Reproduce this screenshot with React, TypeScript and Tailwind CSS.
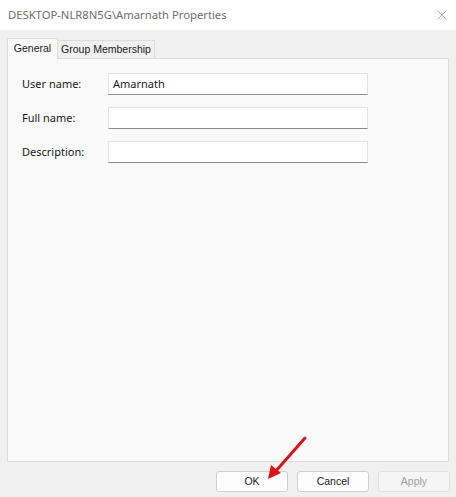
import { X } from 'lucide-react'

const font = { fontFamily: '"Noto Sans", "Open Sans", sans-serif' }
const narrow = { fontFamily: '"Liberation Sans", Arial, sans-serif' }

function Field({ label, value }: { label: string; value?: string }) {
    return (
        <div className="flex items-center h-[22px]">
            <span className="w-[86px] text-[11px] text-[#1a1a1a]">{label}</span>
            <div className="w-[260px] h-[22px] bg-white border border-[#e3e3e3] border-b-[#8a8a8a] flex items-center px-[4px] text-[11px] text-[#1a1a1a]">
                {value}
            </div>
        </div>
    )
}

function Btn({ text, disabled }: { text: string; disabled?: boolean }) {
    return (
        <div style={narrow} className={
            disabled
                ? 'w-[72px] h-[21px] rounded-[3px] border border-[#e2e2e2] bg-[#f5f5f5] flex items-center justify-center text-[10.5px] text-[#a0a0a0]'
                : 'w-[72px] h-[21px] rounded-[3px] border border-[#d0d0d0] bg-[#fdfdfd] flex items-center justify-center text-[10.5px] text-[#1a1a1a]'
        }>
            {text}
        </div>
    )
}

export default function App() {
    return (
        <div style={font} className="w-[456px] h-[497px] bg-[#f0f0f0] flex flex-col relative overflow-hidden">
            {/* title bar */}
            <div className="h-[30px] bg-white flex items-center justify-between pl-[8px] pr-[6px]">
                <span className="text-[11.25px] text-[#6e6e6e]">DESKTOP-NLR8N5G\Amarnath Properties</span>
                <X size={16} strokeWidth={1} className="text-[#8a8a8a]" />
            </div>
            {/* tabs */}
            <div style={narrow} className="flex items-end pl-[7px] pt-[8px] h-[28px]">
                <div className="h-[21px] w-[51px] justify-center bg-[#f9f9f9] border border-[#dcdcdc] border-b-0 flex items-center text-[10.5px] text-[#1a1a1a] relative top-[1px]">General</div>
                <div className="h-[18px] w-[97px] justify-center bg-[#f0f0f0] border border-[#dcdcdc] border-l-0 border-b-0 flex items-center text-[10.5px] text-[#1a1a1a]">Group Membership</div>
            </div>
            {/* panel */}
            <div className="mx-[7px] h-[404px] bg-[#f9f9f9] border border-[#dcdcdc] flex flex-col gap-[12px] pt-[14px] pl-[14px]">
                <Field label="User name:" value="Amarnath" />
                <Field label="Full name:" />
                <Field label="Description:" />
            </div>
            {/* buttons */}
            <div className="flex justify-end gap-[9px] pr-[6px] pt-[9px]">
                <Btn text="OK" />
                <Btn text="Cancel" />
                <Btn text="Apply" disabled />
            </div>
            {/* red arrow annotation */}
            <svg className="absolute left-0 top-0 pointer-events-none" width="456" height="497">
                <line x1="305" y1="438" x2="275" y2="472" stroke="#d7141a" strokeWidth="3" strokeLinecap="round" />
                <polygon points="268,479 271,465 281,473" fill="#d7141a" />
            </svg>
        </div>
    )
}
